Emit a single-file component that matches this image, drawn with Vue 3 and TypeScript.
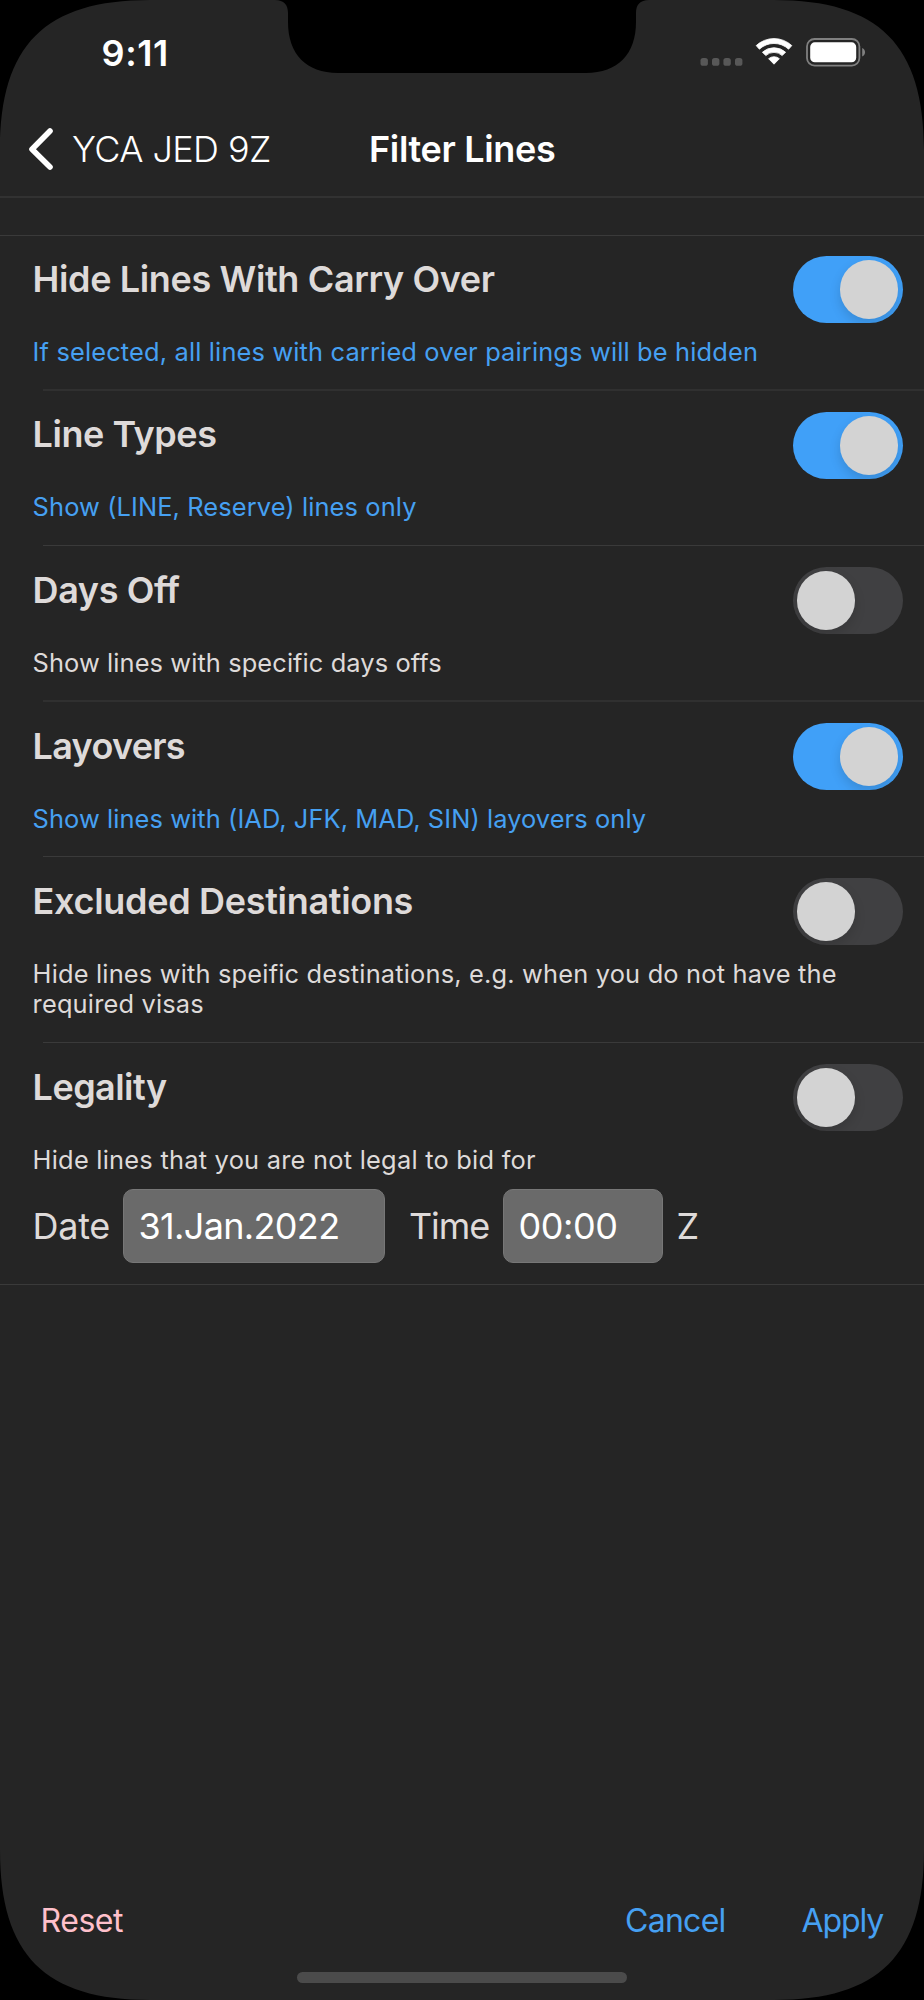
<script setup lang="ts">
import { reactive } from 'vue'

interface FilterRow {
  id: string
  title: string
  note: string
  on: boolean
  titleTracking: number
  noteTracking: number
}

const filters = reactive<FilterRow[]>([
  { id: 'carry', title: 'Hide Lines With Carry Over', note: 'If selected, all lines with carried over pairings will be hidden', on: true, titleTracking: -0.37, noteTracking: 0.155 },
  { id: 'types', title: 'Line Types', note: 'Show (LINE, Reserve) lines only', on: true, titleTracking: -0.45, noteTracking: 0.117 },
  { id: 'days', title: 'Days Off', note: 'Show lines with specific days offs', on: false, titleTracking: -0.4, noteTracking: 0.1 },
  { id: 'layovers', title: 'Layovers', note: 'Show lines with (IAD, JFK, MAD, SIN) layovers only', on: true, titleTracking: -0.72, noteTracking: 0.09 },
  { id: 'excluded', title: 'Excluded Destinations', note: 'Hide lines with speific destinations, e.g. when you do not have the required visas', on: false, titleTracking: -0.31, noteTracking: 0.18 },
  { id: 'legality', title: 'Legality', note: 'Hide lines that you are not legal to bid for', on: false, titleTracking: -0.55, noteTracking: 0.24 },
])
</script>

<template>
  <div class="phone">
    <header class="status">
      <span class="clock">9:11</span>
      <div class="indicators">
        <svg class="dots" width="44" height="8" viewBox="0 0 44 8">
          <rect x="0.5" width="7.4" height="7.8" rx="2.6" />
          <rect x="12" width="7.4" height="7.8" rx="2.6" />
          <rect x="23.4" width="7.4" height="7.8" rx="2.6" />
          <rect x="35" width="7.4" height="7.8" rx="2.6" />
        </svg>
        <svg class="wifi" width="38" height="28" viewBox="0 0 38 28">
          <path d="M1.2 7.6A26 26 0 0 1 36.8 7.6L33.6 11.2A21.4 21.4 0 0 0 4.4 11.2Z" stroke="#fff" stroke-width="0.8" stroke-linejoin="round" />
          <path d="M7.4 14.2A17.2 17.2 0 0 1 30.6 14.2L27.2 17.6A12 12 0 0 0 10.8 17.6Z" stroke="#fff" stroke-width="0.8" stroke-linejoin="round" />
          <path d="M13.6 20.7A8.4 8.4 0 0 1 24.4 20.7L19 26.2Z" stroke="#fff" stroke-width="0.8" stroke-linejoin="round" />
        </svg>
        <svg class="battery" width="60" height="30" viewBox="0 0 60 30">
          <rect x="1" y="1" width="52.4" height="26.6" rx="7.6" fill="none" stroke="#808080" stroke-width="1.8" />
          <rect x="4.2" y="4.3" width="46" height="20" rx="4.6" fill="#fff" />
          <path d="M56.2 10V18.6C60 17 60 11.6 56.2 10Z" fill="#808080" />
        </svg>
      </div>
    </header>

    <nav class="bar">
      <button class="back" type="button">
        <svg width="26" height="44" viewBox="0 0 26 44">
          <path d="M22 4 4 22.2 22 40" fill="none" stroke="#fff" stroke-width="5.6" stroke-linecap="round" stroke-linejoin="round" />
        </svg>
        <span>YCA JED 9Z</span>
      </button>
      <h1>Filter Lines</h1>
    </nav>

    <main class="list">
      <section v-for="f in filters" :key="f.id" class="row" :class="f.id">
        <div class="head">
          <h2 :style="{ letterSpacing: f.titleTracking + 'px' }">{{ f.title }}</h2>
          <button class="switch" :class="{ on: f.on }" type="button" role="switch" :aria-checked="f.on" @click="f.on = !f.on">
            <span class="thumb"></span>
          </button>
        </div>
        <p class="note" :class="{ active: f.on }" :style="{ letterSpacing: f.noteTracking + 'px' }">{{ f.note }}</p>
        <div v-if="f.id === 'legality'" class="fields">
          <span class="label date-label">Date</span>
          <span class="field date">31.Jan.2022</span>
          <span class="label time-label">Time</span>
          <span class="field time">00:00</span>
          <span class="label zone">Z</span>
        </div>
      </section>
    </main>

    <footer class="actions">
      <button class="reset" type="button">Reset</button>
      <button class="cancel" type="button">Cancel</button>
      <button class="apply" type="button">Apply</button>
    </footer>
    <div class="home"></div>

    <svg class="bezel" width="924" height="2000" viewBox="0 0 924 2000">
      <path d="M0 0H150C45 0 0 45 0 150Z" />
      <path d="M924 0H774C879 0 924 45 924 150Z" />
      <path d="M0 2000H150C45 2000 0 1955 0 1850Z" />
      <path d="M924 2000H774C879 2000 924 1955 924 1850Z" />
      <path d="M275 0C284 0 288 5 288 13V22C288 54 306 73 338 73H586C618 73 636 54 636 22V13C636 5 640 0 649 0Z" />
    </svg>
  </div>
</template>

<style>
body {
  background: #252525;
}
</style>

<style scoped>
.phone {
  position: relative;
  display: flex;
  flex-direction: column;
  width: 924px;
  height: 2000px;
  overflow: hidden;
  background: #252525;
  color: #dedad9;
  font-family: Inter, "Liberation Sans", sans-serif;
  font-size: 36px;
  line-height: 44px;
}
button {
  margin: 0;
  padding: 0;
  border: 0;
  background: none;
  color: inherit;
  font: inherit;
}
h1,
h2,
p {
  margin: 0;
}
.status {
  display: flex;
  justify-content: space-between;
  height: 105px;
  box-sizing: border-box;
  padding: 31px 58px 0 101.5px;
  color: #fff;
}
.clock {
  font-weight: 600;
  letter-spacing: 0.6px;
}
.indicators {
  display: flex;
  align-items: flex-start;
}
.dots {
  margin-top: 27px;
  fill: #585858;
}
.wifi {
  margin: 7px 0 0 11px;
  fill: #fff;
}
.battery {
  margin: 7px 0 0 13px;
}
.bar {
  display: grid;
  grid-template-columns: 369px 1fr;
  height: 93px;
  box-sizing: border-box;
  padding-top: 22px;
  border-bottom: 2px solid #323232;
  color: #fff;
}
.back {
  display: flex;
  gap: 18.4px;
  height: 44px;
  padding-left: 27.6px;
  font-weight: 300;
  letter-spacing: -0.58px;
  white-space: nowrap;
}
h1 {
  font-size: 36px;
  font-weight: 600;
  letter-spacing: -0.33px;
}
.list {
  margin-top: 37px;
  border-top: 1px solid #3a3a3a;
}
.row {
  position: relative;
  box-sizing: border-box;
  height: 155px;
  padding: 22px 21.5px 0 32.6px;
}
.row::after {
  content: "";
  position: absolute;
  right: 0;
  bottom: 0;
  left: 43px;
  height: 1px;
  background: #3a3a3a;
}
.row.carry::after,
.row.days::after {
  height: 2px;
  background: #303030;
}
.row.carry,
.row.types {
  padding-top: 21px;
}
.row.types .switch {
  margin-top: 0;
}
.row.days {
  height: 156px;
}
.row.excluded {
  height: 186px;
}
.row.legality {
  height: 242px;
}
.row.legality::after {
  left: 0;
}
.head {
  display: flex;
  justify-content: space-between;
  height: 80px;
}
h2 {
  font-size: 36px;
  font-weight: 600;
}
.switch {
  flex: none;
  width: 110px;
  height: 67px;
  margin-top: -1px;
  padding: 4.3px;
  border-radius: 34px;
  background: #404042;
  display: flex;
}
.switch.on {
  justify-content: flex-end;
  background: #40a0f8;
}
.thumb {
  width: 58.4px;
  height: 58.4px;
  border-radius: 50%;
  background: #d3d3d3;
  box-shadow: 0 5px 12px rgba(0, 0, 0, 0.14);
}
.switch {
  overflow: hidden;
}
.note {
  font-size: 25.4px;
  line-height: 30.4px;
}
.note.active {
  color: #46a0f2;
}
.fields {
  display: flex;
  align-items: center;
  height: 74px;
  margin-top: 13.6px;
}
.label {
  letter-spacing: -0.8px;
}
.date-label {
  width: 90.4px;
  letter-spacing: -0.3px;
}
.field {
  box-sizing: border-box;
  height: 74px;
  border: 1px solid #777;
  border-radius: 10px;
  background: #6a6a6a;
  color: #fff;
  line-height: 73px;
}
.date {
  width: 262px;
  padding-left: 14.5px;
  letter-spacing: -0.66px;
}
.time-label {
  width: 94px;
  margin-left: 24px;
  letter-spacing: -1.1px;
}
.time {
  width: 160px;
  padding-left: 14.5px;
  letter-spacing: -0.42px;
}
.zone {
  margin-left: 13.5px;
}
.actions {
  display: flex;
  margin-top: auto;
  padding: 0 41px 0 40.5px;
  height: 72px;
  font-size: 32px;
  line-height: 42px;
  align-items: flex-start;
}
.reset {
  color: #ffc0cb;
  letter-spacing: -0.45px;
}
.cancel {
  margin-left: auto;
  color: #46a0f2;
  letter-spacing: -0.74px;
}
.apply {
  margin-left: 76px;
  color: #46a0f2;
  letter-spacing: -1.15px;
}
.home {
  width: 330px;
  height: 11px;
  margin: 0 auto 17px;
  border-radius: 6px;
  background: #4b4b4b;
}
.bezel {
  position: absolute;
  inset: 0;
  pointer-events: none;
}
</style>
